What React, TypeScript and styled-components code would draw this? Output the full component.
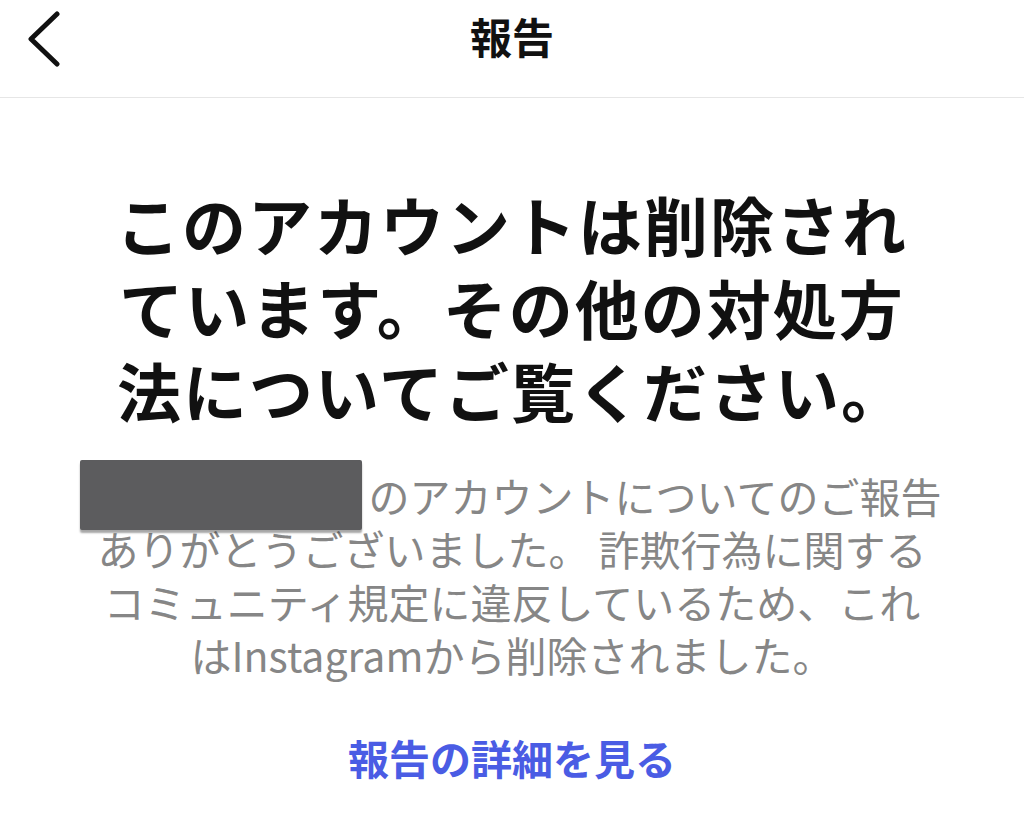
import React from "react";
import styled, { createGlobalStyle } from "styled-components";

const Global = createGlobalStyle`
  html, body { margin: 0; padding: 0; background: #ffffff; }
  body { font-family: "Noto Sans CJK JP", "Noto Sans", "Liberation Sans", sans-serif; -webkit-font-smoothing: antialiased; }
`;

const Page = styled.div`
  width: 1024px;
  height: 826px;
  background: #fff;
  overflow: hidden;
  display: flex;
  flex-direction: column;
`;

const Header = styled.header`
  height: 97px;
  border-bottom: 1px solid #e6e6e6;
  display: grid;
  grid-template-columns: 100px 1fr 100px;
  align-items: start;
`;

const BackButton = styled.button`
  background: none;
  border: 0;
  padding: 0;
  margin: 6px 0 0 22px;
  width: 44px;
  height: 62px;
  display: flex;
  align-items: center;
  justify-content: center;
  cursor: pointer;
`;

const Title = styled.h1`
  margin: 0;
  padding-top: 9px;
  text-align: center;
  font-size: 42px;
  line-height: 54px;
  font-weight: 700;
  color: #111;
`;

const Content = styled.main`
  display: flex;
  flex-direction: column;
  align-items: center;
  text-align: center;
  padding-top: 84px;
`;

const Heading = styled.h2`
  margin: 0;
  font-size: 64px;
  line-height: 83px;
  font-weight: 700;
  color: #111;
  letter-spacing: 2px;
  white-space: nowrap;
`;

const Body = styled.p`
  margin: 38px 0 0;
  font-size: 41px;
  line-height: 53px;
  font-weight: 400;
  color: #868686;
  white-space: nowrap;
`;

const Redacted = styled.span`
  display: inline-block;
  width: 282px;
  height: 70px;
  margin: -20px 4px -20px 0;
  vertical-align: middle;
  background: #5c5c5e;
  border-radius: 2px;
  box-shadow: 0 3px 2px rgba(0, 0, 0, 0.35);
  position: relative;
  top: -7px;
  left: -3px;
`;

const Link = styled.a`
  margin-top: 50px;
  font-size: 41px;
  line-height: 52px;
  font-weight: 700;
  color: #4a5ce4;
  text-decoration: none;
  cursor: pointer;
`;

export default function App() {
  return (
    <Page>
      <Global />
      <Header>
        <BackButton aria-label="戻る">
          <svg width="40" height="60" viewBox="0 0 40 60" fill="none">
            <path d="M33 7 L7 32 L33 57" stroke="#111" strokeWidth="5" strokeLinecap="round" strokeLinejoin="round" />
          </svg>
        </BackButton>
        <Title>報告</Title>
        <div />
      </Header>
      <Content>
        <Heading>
          このアカウントは削除され
          <br />
          ています。その他の対処方
          <br />
          法についてご覧ください。
        </Heading>
        <Body>
          <Redacted />
          のアカウントについてのご報告
          <br />
          ありがとうございました。 詐欺行為に関する
          <br />
          コミュニティ規定に違反しているため、これ
          <br />
          はInstagramから削除されました。
        </Body>
        <Link>報告の詳細を見る</Link>
      </Content>
    </Page>
  );
}
